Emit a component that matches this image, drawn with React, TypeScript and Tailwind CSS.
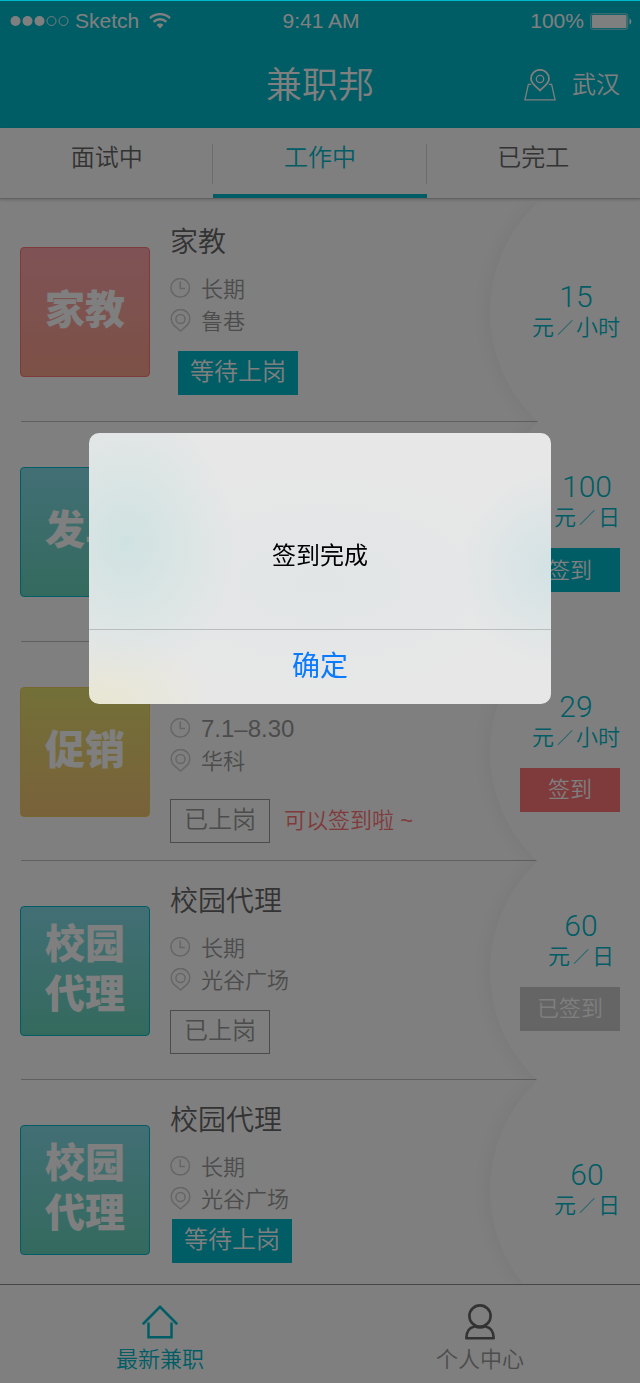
import { useState } from "react";
import type { ReactNode } from "react";

type Pay = {
  amount: string;
  per: string;
  action?: { label: string; className: string; disabled?: boolean };
  className?: string;
};

type Job = {
  id: number;
  badge: string[];
  badgeClass: string;
  title: string;
  time: string;
  place: string;
  status: string;
  waiting: boolean;
  statusClass: string;
  note?: string;
  pay: Pay;
};

const TEAL_BADGE = "border-[#00bacc] bg-linear-to-b from-[#84deea] to-[#68d4bc]";

const jobs: Job[] = [
  {
    id: 1,
    badge: ["家教"],
    badgeClass: "border-[#ff7474] bg-linear-to-b from-[#ffa6ac] to-[#f9a28c]",
    title: "家教",
    time: "长期",
    place: "鲁巷",
    status: "等待上岗",
    waiting: true,
    statusClass: "mt-3.5 ml-2",
    pay: { amount: "15", per: "小时" },
  },
  {
    id: 2,
    badge: ["发单"],
    badgeClass: TEAL_BADGE,
    title: "发单",
    time: "长期",
    place: "光谷广场",
    status: "已上岗",
    waiting: false,
    statusClass: "mt-3.5",
    pay: {
      amount: "100",
      per: "日",
      action: { label: "签到", className: "bg-[#00bacc]" },
    },
  },
  {
    id: 3,
    badge: ["促销"],
    badgeClass: "border-[#f0cc60] bg-linear-to-b from-[#e6e070] to-[#f2c474]",
    title: "促销",
    time: "7.1–8.30",
    place: "华科",
    status: "已上岗",
    waiting: false,
    statusClass: "mt-5.5",
    note: "可以签到啦",
    pay: {
      amount: "29",
      per: "小时",
      action: { label: "签到", className: "bg-[#ff7477]" },
    },
  },
  {
    id: 4,
    badge: ["校园", "代理"],
    badgeClass: TEAL_BADGE,
    title: "校园代理",
    time: "长期",
    place: "光谷广场",
    status: "已上岗",
    waiting: false,
    statusClass: "mt-3.5",
    pay: {
      amount: "60",
      per: "日",
      action: { label: "已签到", className: "bg-[#cacaca]", disabled: true },
      className: "pr-1.5",
    },
  },
  {
    id: 5,
    badge: ["校园", "代理"],
    badgeClass: TEAL_BADGE,
    title: "校园代理",
    time: "长期",
    place: "光谷广场",
    status: "等待上岗",
    waiting: true,
    statusClass: "mt-1 ml-0.5",
    pay: { amount: "60", per: "日" },
  },
];

const tabs = ["面试中", "工作中", "已完工"];

function WifiIcon() {
  return (
    <svg viewBox="0 0 22 16" className="h-4 w-[22px]" fill="none" stroke="currentColor" strokeWidth="2.4" aria-hidden="true">
      <path d="M1 5.2C6.6-.2 15.4-.2 21 5.2" />
      <path d="M4.6 8.9c3.6-3.5 9.2-3.5 12.8 0" />
      <path d="M7.6 11.9c2-1.9 4.8-1.9 6.8 0L11 15.4z" fill="currentColor" stroke="none" />
    </svg>
  );
}

function BatteryIcon() {
  return (
    <svg viewBox="0 0 42 17" className="h-[17px] w-[42px]" aria-hidden="true">
      <rect x=".75" y=".75" width="37" height="15.5" rx="2" fill="none" stroke="currentColor" strokeOpacity=".6" strokeWidth="1" />
      <rect x="2" y="2" width="34.5" height="13" rx="1" fill="currentColor" />
      <path d="M39.5 5.5c2.4.8 2.4 5.2 0 6z" fill="currentColor" />
    </svg>
  );
}

function MapIcon() {
  return (
    <svg viewBox="0 0 32 32" className="size-8" fill="none" stroke="currentColor" strokeWidth="1.3" aria-hidden="true">
      <path d="M7.2 15.4H4.4L.9 30.8h30.2l-3.5-15.4h-2.8" />
      <path d="M16 21.4c-3-3.2-9-6.6-9-11.6a9 9 0 0 1 18 0c0 5-6 8.4-9 11.6z" strokeWidth="1.8" />
      <circle cx="16" cy="10" r="3.7" />
    </svg>
  );
}

function ClockIcon() {
  return (
    <svg viewBox="0 0 21 22" className="h-[22px] w-[21px]" fill="none" stroke="currentColor" strokeWidth="1.5" aria-hidden="true">
      <circle cx="10.2" cy="9.8" r="9.3" />
      <path d="M10.2 3.5v7H15" />
    </svg>
  );
}

function PinIcon() {
  return (
    <svg viewBox="0 0 21 24" className="h-6 w-[21px]" fill="none" stroke="currentColor" strokeWidth="1.5" aria-hidden="true">
      <path d="M10.5 22 4 16.4a9.3 9.3 0 1 1 13 0z" />
      <circle cx="10.5" cy="10" r="4.6" />
    </svg>
  );
}

function HomeIcon() {
  return (
    <svg viewBox="0 0 36 34" className="h-[34px] w-9" fill="none" stroke="currentColor" strokeWidth="2.5" strokeLinecap="round" aria-hidden="true">
      <path d="M1.5 18.5 18 1.8l16.5 16.7" />
      <path d="M6.5 18.5v13.700h23V18.5" />
    </svg>
  );
}

function PersonIcon() {
  return (
    <svg viewBox="0 0 32 36" className="h-9 w-8" fill="none" stroke="currentColor" strokeWidth="2.6" aria-hidden="true">
      <circle cx="16" cy="12" r="10.6" />
      <path d="M10.5 22.4C5 23.5 2.3 27.5 2.3 34.3h27.4c0-6.8-2.7-10.8-8.2-11.9-3.5 1.4-7.5 1.4-11 0z" strokeLinejoin="round" />
    </svg>
  );
}

function Detail({ icon, children }: { icon: ReactNode; children: ReactNode }) {
  return (
    <div className="flex h-8 items-center gap-2.5">
      <span className="text-[#cccccc]">{icon}</span>
      {children}
    </div>
  );
}

function JobRow({ job }: { job: Job }) {
  return (
    <li className="relative flex h-[220px] shrink-0 flex-col overflow-hidden nth-[n+3]:h-[219px]">
      <div className="flex grow gap-5 pl-5">
        <div
          className={`mt-[45px] flex size-[130px] shrink-0 flex-col items-center justify-center rounded border pb-1 text-[40px] leading-[50px] font-black text-white ${job.badgeClass}`}
        >
          {job.badge.map((line) => (
            <span key={line}>{line}</span>
          ))}
        </div>
        <div className="pt-[21px]">
          <h2 className="text-[28px] leading-10 text-[#666666]">{job.title}</h2>
          <div className="mt-2.5 text-[22px] text-[#999999]">
            <Detail icon={<ClockIcon />}>
              <span className={job.time.includes("–") ? "text-2xl" : ""}>{job.time}</span>
            </Detail>
            <Detail icon={<PinIcon />}>{job.place}</Detail>
          </div>
          <div className={`flex items-center gap-3.5 ${job.statusClass}`}>
            {job.waiting ? (
              <span className="flex h-11 w-[120px] items-center justify-center bg-[#00bacc] pb-0.5 text-2xl text-white">
                {job.status}
              </span>
            ) : (
              <span className="flex h-11 w-[100px] items-center justify-center border border-[#999999] pb-0.5 text-2xl text-[#999999]">
                {job.status}
              </span>
            )}
            {job.note && <span className="pb-0.5 text-[22px] text-[#ff7477]">{job.note} ~</span>}
          </div>
        </div>
      </div>
      <div className="ml-[21px] h-px bg-[#bebebe]" />
      <div className="absolute -top-10 -right-[150px] size-[300px] rounded-full bg-white shadow-[0_0_24px_rgba(0,0,0,0.07)]" />
      <div className="absolute inset-y-0 right-5 flex flex-col items-end justify-center">
        <div className={`flex flex-col items-center gap-0.5 text-[#00bacc] ${job.pay.className ?? ""}`}>
          <span className="font-['Roboto','Liberation_Sans',sans-serif] text-3xl leading-[30px] font-light">
            {job.pay.amount}
          </span>
          <span className="flex text-[22px] leading-7">
            元<span className="w-[22px] text-center text-base leading-7">／</span>
            {job.pay.per}
          </span>
        </div>
        {job.pay.action && (
          <button
            type="button"
            disabled={job.pay.action.disabled}
            className={`mt-4 h-11 w-[100px] text-[22px] text-white ${job.pay.action.className}`}
          >
            {job.pay.action.label}
          </button>
        )}
      </div>
    </li>
  );
}

export default function App() {
  const [open, setOpen] = useState(true);
  const [tab, setTab] = useState(1);

  return (
    <div className="flex h-screen flex-col overflow-hidden bg-white font-['Liberation_Sans','Noto_Sans_CJK_SC',sans-serif] font-[350]">
      <header className="h-32 shrink-0 bg-[#00bacc] text-white">
        <div className="grid h-[42px] grid-cols-3 items-center pr-2 pl-2.5 text-[21px] font-normal">
          <div className="flex items-center gap-1.5">
            <svg viewBox="0 0 59 12" className="h-3 w-[59px]" fill="currentColor" aria-hidden="true">
              <circle cx="5.5" cy="6" r="5" />
              <circle cx="17.5" cy="6" r="5" />
              <circle cx="29.5" cy="6" r="5" />
              <circle cx="41.5" cy="6" r="4.5" fill="none" stroke="currentColor" strokeWidth=".9" />
              <circle cx="53.5" cy="6" r="4.5" fill="none" stroke="currentColor" strokeWidth=".9" />
            </svg>
            <span className="pr-1">Sketch</span>
            <WifiIcon />
          </div>
          <span className="text-center">9:41 AM</span>
          <div className="flex items-center justify-end gap-1.5">
            <span>100%</span>
            <BatteryIcon />
          </div>
        </div>
        <div className="grid h-[86px] grid-cols-3 items-center px-5">
          <h1 className="col-start-2 pt-0.5 text-center text-4xl">兼职邦</h1>
          <button type="button" className="flex items-center justify-end gap-4 text-2xl">
            <MapIcon />
            武汉
          </button>
        </div>
      </header>

      <nav className="relative grid h-[71px] shrink-0 grid-cols-3 border-b border-[#c4c4c4] shadow-[0_1px_3px_rgba(0,0,0,0.2)]">
        {tabs.map((name, i) => (
          <button
            key={name}
            type="button"
            onClick={() => setTab(i)}
            className={`relative border-b-4 pb-1.5 text-2xl ${
              i === tab ? "border-[#00bacc] text-[#00bacc]" : "border-transparent text-[#666666]"
            }`}
          >
            {name}
            {i < tabs.length - 1 && <span className="absolute top-4 right-0 h-10 w-px bg-[#d8d8d8]" />}
          </button>
        ))}
      </nav>

      <main className="min-h-0 grow overflow-hidden pt-[3px]">
        <ul>
          {jobs.map((job) => (
            <JobRow key={job.id} job={job} />
          ))}
        </ul>
      </main>

      <footer className="relative grid h-[99px] shrink-0 grid-cols-2 border-t border-[#8c8c8c] bg-white text-[22px] leading-10">
        <a href="#jobs" className="flex flex-col items-center pt-[19px] text-[#00bacc]">
          <span className="flex h-9 shrink-0 items-center">
            <HomeIcon />
          </span>
          最新兼职
        </a>
        <a href="#me" className="flex flex-col items-center pt-[19px] text-[#999999]">
          <span className="flex h-9 shrink-0 items-center text-[#666666]">
            <PersonIcon />
          </span>
          个人中心
        </a>
      </footer>

      {open && (
        <div className="fixed inset-x-0 top-px bottom-0 z-20 flex items-start justify-center bg-black/50 px-6 pt-[432px]">
          <div
            role="dialog"
            aria-modal="true"
            aria-labelledby="dialog-message"
            className="w-full max-w-[462px] overflow-hidden rounded-[10px] bg-[#e7e7e7] bg-[radial-gradient(ellipse_110px_140px_at_8%_40%,#cfe2e1,transparent),radial-gradient(ellipse_90px_100px_at_100%_50%,#d3e2e4,transparent),radial-gradient(ellipse_110px_70px_at_3%_100%,#e8e6d2,transparent),radial-gradient(ellipse_220px_110px_at_50%_55%,#e1e5e6,transparent)]"
          >
            <p
              id="dialog-message"
              className="flex h-[196px] items-center justify-center pt-[50px] text-2xl font-normal text-black"
            >
              签到完成
            </p>
            <button
              type="button"
              onClick={() => setOpen(false)}
              className="h-[75px] w-full border-t border-[#b9bdbd] text-[28px] font-normal text-[#0a7aff]"
            >
              确定
            </button>
          </div>
        </div>
      )}
    </div>
  );
}
